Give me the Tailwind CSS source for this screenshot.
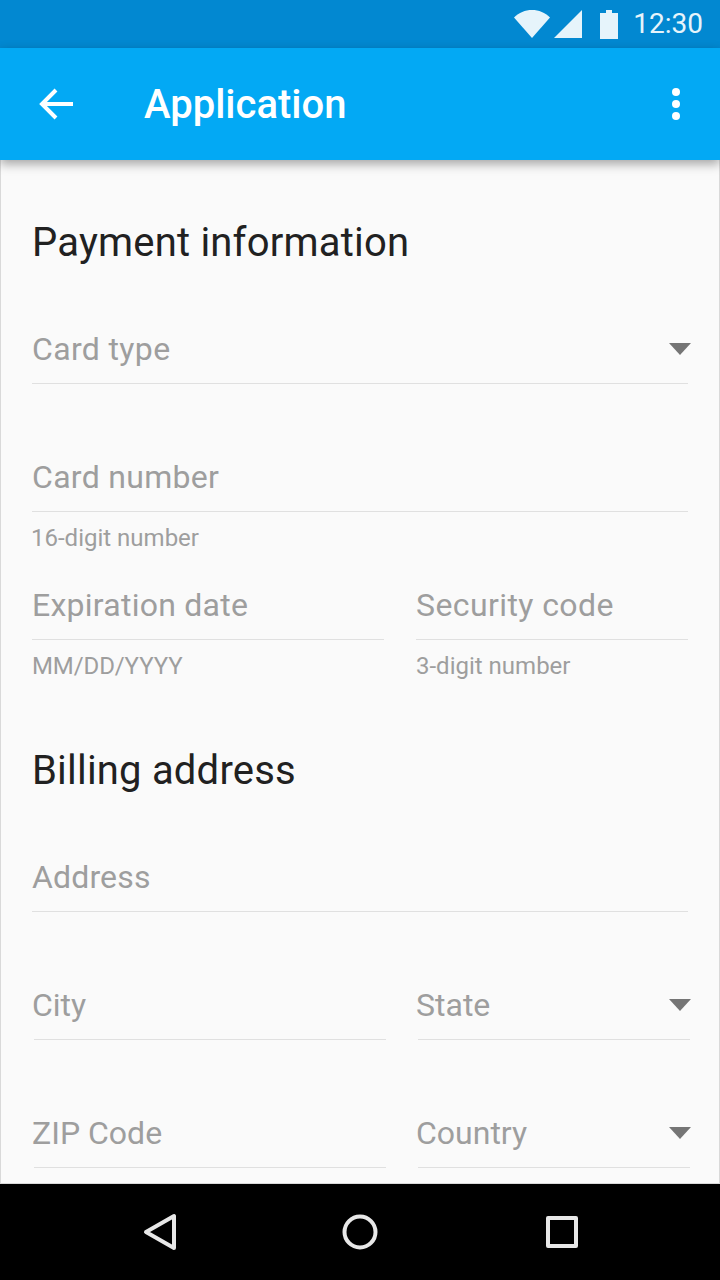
<!DOCTYPE html>
<html lang="en">
<head>
    <meta charset="UTF-8">
    <meta name="viewport" content="width=device-width, initial-scale=1.0">
    <title>Application</title>
    <script src="https://cdn.jsdelivr.net/npm/@tailwindcss/browser@4"></script>
</head>
<body class="bg-black font-['Roboto',sans-serif] antialiased">
    <div class="w-[720px] h-[1280px] flex flex-col overflow-hidden">
        <!-- Status bar -->
        <div class="h-12 shrink-0 bg-[#0288d1] flex items-center justify-end text-[#e6f4fb]">
            <svg class="w-[36px] h-[28px] mr-[4px]" viewBox="0 0 36 28"><path d="M0 7.500C5 2.600 11 0 18 0s13 2.600 18 7.500L18 28z" fill="currentColor"/></svg>
            <svg class="w-[28px] h-[28px] mr-[18px]" viewBox="0 0 28 28"><path d="M28 0v28H0z" fill="currentColor"/></svg>
            <svg class="w-[18px] h-[29px] mr-[15px]" viewBox="0 0 18 29"><path d="M6 0h6v3h6v26H0V3h6z" fill="currentColor"/></svg>
            <span class="text-[28px] leading-none mr-[17px]">12:30</span>
        </div>

        <!-- Toolbar -->
        <div class="h-[112px] shrink-0 bg-[#03a9f4] flex items-center relative z-10 shadow-[0_4px_10px_rgba(0,0,0,0.35)]">
            <svg class="w-[36px] h-[36px] ml-[38px]" viewBox="0 0 36 36" fill="none" stroke="#fff" stroke-width="4"><path d="M35 18H5M18 4 4 18l14 14"/></svg>
            <h1 class="ml-[70px] pt-[2px] text-[40px] font-medium text-white">Application</h1>
            <div class="ml-auto mr-[40px] flex flex-col gap-1">
                <span class="w-2 h-2 rounded-full bg-white"></span>
                <span class="w-2 h-2 rounded-full bg-white"></span>
                <span class="w-2 h-2 rounded-full bg-white"></span>
            </div>
        </div>

        <!-- Form -->
        <div class="flex-1 min-h-0 bg-[#fafafa] border-x border-b border-[#d9d9d9] px-[31px] text-[#9e9e9e] text-[32px]">
            <h2 class="pt-[59px] mb-[53px] text-[40px] tracking-[0.2px] leading-[48px] text-[#212121]">Payment information</h2>

            <div class="h-[64px] flex items-center justify-between border-b border-[#e0e0e0] pb-[5px]">
                <span class="tracking-[0.35px]">Card type</span>
                <svg class="w-[22px] h-[12px] -mr-[3px]" viewBox="0 0 22 12"><path d="M0 0h22L11 12z" fill="#757575"/></svg>
            </div>

            <div class="h-[64px] mt-[64px] flex items-center border-b border-[#e0e0e0] pb-[5px] tracking-[0.3px]">Card number</div>
            <div class="h-[64px] pt-[10px] -ml-px text-[24px] leading-[32px]">16-digit number</div>

            <div class="flex gap-8">
                <div class="w-[352px] shrink-0">
                    <div class="h-[64px] flex items-center border-b border-[#e0e0e0] pb-[5px] tracking-[0.25px]">Expiration date</div>
                    <div class="pt-[10px] text-[24px] tracking-[-0.1px] leading-[32px]">MM/DD/YYYY</div>
                </div>
                <div class="w-[272px] shrink-0">
                    <div class="h-[64px] flex items-center border-b border-[#e0e0e0] pb-[5px] tracking-[0.4px]">Security code</div>
                    <div class="pt-[10px] text-[24px] leading-[32px]">3-digit number</div>
                </div>
            </div>

            <h2 class="pt-[43px] mt-[22px] mb-[53px] text-[40px] tracking-[0.2px] leading-[48px] text-[#212121]">Billing address</h2>

            <div class="h-[64px] flex items-center border-b border-[#e0e0e0] pb-[5px] tracking-[0.15px]">Address</div>

            <div class="flex gap-8 mt-[64px]">
                <div class="w-[352px] shrink-0 h-[64px] ml-[2px] flex items-center border-b border-[#e0e0e0] pb-[5px]"><span class="-ml-[2px]">City</span></div>
                <div class="w-[272px] shrink-0 h-[64px] flex items-center justify-between border-b border-[#e0e0e0] pb-[5px]">
                    <span class="-ml-[2px]">State</span>
                    <svg class="w-[22px] h-[12px] -mr-px" viewBox="0 0 22 12"><path d="M0 0h22L11 12z" fill="#757575"/></svg>
                </div>
            </div>

            <div class="flex gap-8 mt-[64px]">
                <div class="w-[352px] shrink-0 h-[64px] ml-[2px] flex items-center border-b border-[#e0e0e0] pb-[5px]"><span class="-ml-[2px]">ZIP Code</span></div>
                <div class="w-[272px] shrink-0 h-[64px] flex items-center justify-between border-b border-[#e0e0e0] pb-[5px]">
                    <span class="-ml-[2px]">Country</span>
                    <svg class="w-[22px] h-[12px] -mr-px" viewBox="0 0 22 12"><path d="M0 0h22L11 12z" fill="#757575"/></svg>
                </div>
            </div>
        </div>

        <!-- Nav bar -->
        <div class="h-[96px] shrink-0 bg-black relative">
            <svg class="absolute left-[142px] top-[28px] w-[36px] h-[40px]" viewBox="0 0 36 40" fill="none" stroke="#e8e8e8" stroke-width="4" stroke-linejoin="round"><path d="M32 4v32L4 20z"/></svg>
            <svg class="absolute left-[340px] top-[28px] w-[40px] h-[40px]" viewBox="0 0 40 40" fill="none" stroke="#e8e8e8" stroke-width="4"><circle cx="20" cy="20" r="15.500"/></svg>
            <svg class="absolute left-[544px] top-[30px] w-[36px] h-[36px]" viewBox="0 0 36 36" fill="none" stroke="#e8e8e8" stroke-width="4" stroke-linejoin="round"><path d="M4 4h28v28H4z"/></svg>
        </div>
    </div>
</body>
</html>
